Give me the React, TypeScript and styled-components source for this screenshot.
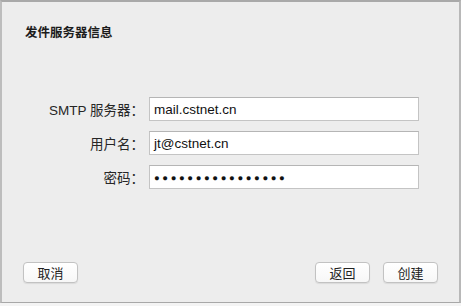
import React from "react";
import styled, { createGlobalStyle } from "styled-components";

const GlobalStyle = createGlobalStyle`
  html, body {
    margin: 0;
    padding: 0;
    background: #f4f4f4;
  }
  body {
    font-family: "Liberation Sans", "Noto Sans CJK SC", sans-serif;
  }
`;

const Sheet = styled.div`
  box-sizing: border-box;
  width: 461px;
  height: 303px;
  background: #ededed;
  border-top: 2px solid #a9a9a9;
  border-left: 2px solid #bdbdbd;
  border-right: 2px solid #b8b8b8;
  border-bottom: 1px solid #a8a8a8;
  display: flex;
  flex-direction: column;
  padding: 22px 21px 19px 21px;
`;

const Title = styled.h1`
  margin: 0 0 0 2px;
  font-size: 12.5px;
  font-weight: 700;
  color: #1c1c1c;
  line-height: 18px;
`;

const Form = styled.div`
  margin-top: 55px;
  display: grid;
  grid-template-columns: 121px 270px;
  column-gap: 5px;
  row-gap: 10px;
  align-items: center;
`;

const Label = styled.label`
  text-align: right;
  font-size: 13.5px;
  color: #262626;
  white-space: nowrap;
`;

const Field = styled.div`
  box-sizing: border-box;
  height: 24px;
  background: #ffffff;
  border: 1px solid #c4c4c4;
  border-top-color: #b5b5b5;
  padding: 0 4px;
  display: flex;
  align-items: center;
  font-size: 13.5px;
  color: #111;
`;

const Dots = styled.span`
  font-size: 9.5px;
  letter-spacing: 2.6px;
  color: #111;
`;

const Spacer = styled.div`
  flex: 1;
`;

const Footer = styled.div`
  display: flex;
  align-items: center;
  gap: 13px;
`;

const Button = styled.button`
  box-sizing: border-box;
  height: 21px;
  width: 55px;
  background: linear-gradient(#ffffff, #f7f7f7);
  border: 1px solid #c2c2c2;
  border-radius: 4px;
  box-shadow: 0 1px 1px rgba(0, 0, 0, 0.08);
  font-family: inherit;
  font-size: 13px;
  color: #222;
  padding: 0;
`;

export default function App() {
  return (
    <>
      <GlobalStyle />
      <Sheet>
        <Title>发件服务器信息</Title>
        <Form>
          <Label>SMTP 服务器：</Label>
          <Field>mail.cstnet.cn</Field>
          <Label>用户名：</Label>
          <Field>jt@cstnet.cn</Field>
          <Label>密码：</Label>
          <Field>
            <Dots>●●●●●●●●●●●●●●●●</Dots>
          </Field>
        </Form>
        <Spacer />
        <Footer>
          <Button>取消</Button>
          <Spacer />
          <Button>返回</Button>
          <Button>创建</Button>
        </Footer>
      </Sheet>
    </>
  );
}
